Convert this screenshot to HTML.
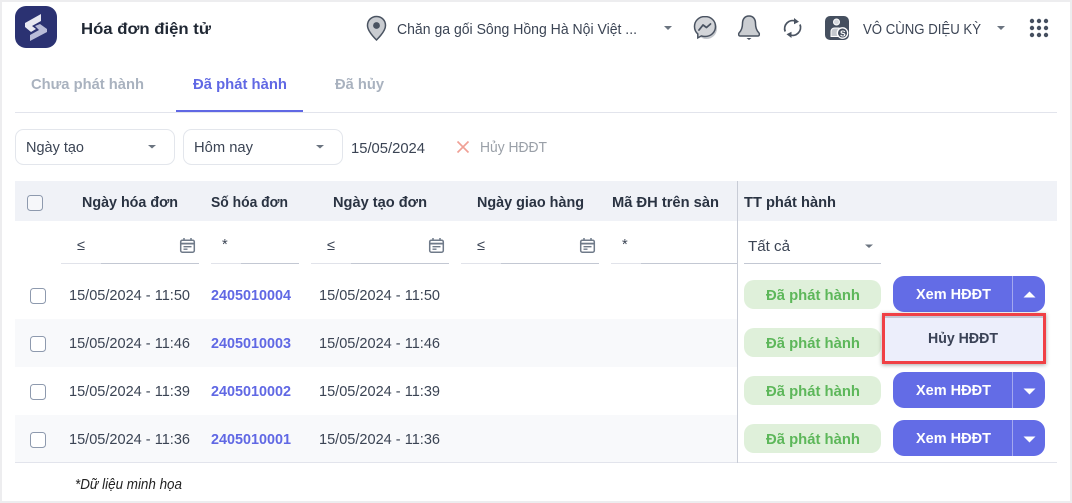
<!DOCTYPE html>
<html><head><meta charset="utf-8">
<style>
html,body{margin:0;padding:0;background:#fff;width:1072px;height:503px;overflow:hidden}
svg{display:block}
text{font-family:"Liberation Sans","Noto Sans CJK SC",sans-serif;font-size:14.6px;fill:#3b4454}
.b{font-weight:700}
.h{font-weight:700;fill:#2a3342}
.c{font-weight:700;fill:#6068e4}
.p{font-weight:700;fill:#5db75a}
.w{font-weight:700;fill:#fff}
.t{font-weight:700;fill:#a9b2bf}
</style></head><body>
<svg width="1072" height="503" viewBox="0 0 1072 503" xmlns="http://www.w3.org/2000/svg">
<defs>
<filter id="sh" x="-10%" y="-20%" width="120%" height="140%"><feDropShadow dx="0" dy="1" stdDeviation="2" flood-color="#000" flood-opacity=".35"/></filter>
<g id="cal" fill="none" stroke="#6f7a89" stroke-width="1.5"><rect x=".7" y="2.200" width="13.600" height="12" rx="1.600"/><path d="M4 0v3M11 0v3"/><path d="M1 5.600h13" stroke-width="1.800"/><path d="M3.500 8.700h8M3.500 11.200h4" stroke-width="1.400"/></g>
</defs>
<!-- outer frame -->
<rect x="1" y="1" width="1070" height="501" fill="#fff" stroke="#ededef" stroke-width="2"/>

<!-- logo -->
<rect x="15" y="6" width="42" height="42" rx="11" fill="#2b3272"/>
<path d="M41 14L41 21L32 26L36 29L31 32L25 27L25 23Z" fill="#e8e9f2"/>
<path d="M30 41L30 35L39 30L35 26L40 24L47 29L47 32Z" fill="#b9bcd8"/>

<text x="81" y="34" class="b" style="font-size:15.500px;fill:#1f2733" textLength="130" lengthAdjust="spacingAndGlyphs">Hóa đơn điện tử</text>

<!-- pin -->
<path d="M376.500 16.500c-5.200 0-9 3.900-9 9 0 5 5.500 11 9 14.500 3.500-3.500 9-9.500 9-14.500 0-5.100-3.800-9-9-9z" fill="#c9ccd1" stroke="#4a5361" stroke-width="1.500"/>
<circle cx="376.500" cy="25.500" r="3.400" fill="#4a5361"/>
<text x="397" y="34" textLength="240" lengthAdjust="spacingAndGlyphs">Chăn ga gối Sông Hồng Hà Nội Việt ...</text>
<path d="M664 26h8l-4 4z" fill="#6b7480"/>

<!-- messenger -->
<ellipse cx="706.500" cy="28.500" rx="10.500" ry="10.500" fill="#c4c7cc"/>
<path d="M705 16.500c-6 0-10.500 4.300-10.500 10 0 3 1.200 5.600 3.300 7.400v4l3.600-2c1.100.4 2.300.6 3.600.6 6 0 10.500-4.300 10.500-10s-4.500-10-10.500-10z" fill="#d3d5d9" stroke="#4a5361" stroke-width="1.500"/>
<path d="M699 30l4-5 3.500 2.500 4-3.500" fill="none" stroke="#4a5361" stroke-width="1.800" stroke-linecap="round" stroke-linejoin="round"/>

<!-- bell -->
<path d="M749 16c-4.500 0-6.500 3.500-6.500 7.500 0 5-1.500 7.500-3.500 9.500-.9 1-.2 3 1 3h18c1.200 0 1.900-2 1-3-2-2-3.500-4.500-3.500-9.500 0-4-2-7.500-6.500-7.500z" fill="#cbced2" stroke="#4a5361" stroke-width="1.500"/>
<path d="M746.500 38h5l-2.500 2z" fill="#4a5361"/>

<!-- sync -->
<path d="M785.200 31.500a8 8 0 0 1 10.500-10.300" fill="none" stroke="#4a5361" stroke-width="1.800"/>
<path d="M800 24.500a8 8 0 0 1-10.500 10.300" fill="none" stroke="#4a5361" stroke-width="1.800"/>
<path d="M794 18l5 3.800-5 2.500z" fill="#4a5361"/>
<path d="M791.500 38l-5-3.800 5-2.500z" fill="#4a5361"/>

<!-- account -->
<rect x="825" y="16" width="24" height="24" rx="5" fill="#454f5f"/>
<circle cx="836.500" cy="22" r="3" fill="#d5d8dd" stroke="#fff" stroke-width="1"/>
<path d="M831 36.500v-5c0-2 1.500-3.500 3.500-3.500h4c1 0 1.500.3 2 .8v7.700z" fill="#c4c8ce" stroke="#fff" stroke-width="1"/>
<circle cx="842.500" cy="33" r="5.200" fill="#454f5f" stroke="#fff" stroke-width="1.300"/>
<text x="840" y="36.300" style="font-size:8.500px;fill:#fff" class="b">S</text>

<text x="863" y="34" textLength="118" lengthAdjust="spacingAndGlyphs">VÔ CÙNG DIỆU KỲ</text>
<path d="M997 26h8l-4 4z" fill="#6b7480"/>

<!-- grid dots -->
<g fill="#454f5f">
<circle cx="1032" cy="21" r="2.200"/><circle cx="1039" cy="21" r="2.200"/><circle cx="1046" cy="21" r="2.200"/>
<circle cx="1032" cy="28" r="2.200"/><circle cx="1039" cy="28" r="2.200"/><circle cx="1046" cy="28" r="2.200"/>
<circle cx="1032" cy="35" r="2.200"/><circle cx="1039" cy="35" r="2.200"/><circle cx="1046" cy="35" r="2.200"/>
</g>

<!-- tabs -->
<text x="31" y="89" class="t" textLength="113" lengthAdjust="spacingAndGlyphs">Chưa phát hành</text>
<text x="193" y="89" class="c" textLength="94" lengthAdjust="spacingAndGlyphs">Đã phát hành</text>
<text x="335" y="89" class="t" textLength="49" lengthAdjust="spacingAndGlyphs">Đã hủy</text>
<rect x="15" y="112" width="1042" height="1" fill="#e2e4ec"/>
<rect x="176" y="110" width="127" height="2" fill="#6068e4"/>

<!-- filters -->
<rect x="15.500" y="129.500" width="159" height="35" rx="8" fill="#fff" stroke="#e3e6ec"/>
<text x="26" y="152" textLength="58" lengthAdjust="spacingAndGlyphs">Ngày tạo</text>
<path d="M148 145h8l-4 3.500z" fill="#6b7480"/>
<rect x="183.500" y="129.500" width="159" height="35" rx="8" fill="#fff" stroke="#e3e6ec"/>
<text x="194" y="152" textLength="59" lengthAdjust="spacingAndGlyphs">Hôm nay</text>
<path d="M316 145h8l-4 3.500z" fill="#6b7480"/>
<text x="351" y="153" textLength="74" lengthAdjust="spacingAndGlyphs">15/05/2024</text>
<path d="M457.500 141.500l11 11M468.500 141.500l-11 11" stroke="#f0a095" stroke-width="1.600"/>
<text x="480" y="152" style="fill:#9aa0a8" textLength="67" lengthAdjust="spacingAndGlyphs">Hủy HĐĐT</text>

<!-- table header -->
<rect x="15" y="181" width="1042" height="40" fill="#f0f2f7"/>
<rect x="27.500" y="195.500" width="15" height="15" rx="3" fill="#f6f7fa" stroke="#8e9aae"/>
<text x="82" y="207" class="h" textLength="96" lengthAdjust="spacingAndGlyphs">Ngày hóa đơn</text>
<text x="211" y="207" class="h" textLength="77" lengthAdjust="spacingAndGlyphs">Số hóa đơn</text>
<text x="333" y="207" class="h" textLength="94" lengthAdjust="spacingAndGlyphs">Ngày tạo đơn</text>
<text x="477" y="207" class="h" textLength="107" lengthAdjust="spacingAndGlyphs">Ngày giao hàng</text>
<text x="612" y="207" class="h" textLength="107" lengthAdjust="spacingAndGlyphs">Mã ĐH trên sàn</text>
<text x="744" y="207" class="h" textLength="92" lengthAdjust="spacingAndGlyphs">TT phát hành</text>

<!-- filter row -->
<g fill="#c3c8d3">
<rect x="101" y="263" width="98" height="1"/>
<rect x="241" y="263" width="58" height="1"/>
<rect x="351" y="263" width="98" height="1"/>
<rect x="501" y="263" width="98" height="1"/>
<rect x="641" y="263" width="96" height="1"/>
<rect x="744" y="263" width="137" height="1"/>
</g>
<g fill="#e1e3ea">
<rect x="61" y="263" width="40" height="1"/>
<rect x="211" y="263" width="30" height="1"/>
<rect x="311" y="263" width="40" height="1"/>
<rect x="461" y="263" width="40" height="1"/>
<rect x="611" y="263" width="30" height="1"/>
</g>
<text x="77" y="250">≤</text><text x="327" y="250">≤</text><text x="477" y="250">≤</text>
<text x="222" y="249">*</text><text x="622" y="249">*</text>
<use href="#cal" x="180" y="238"/><use href="#cal" x="429" y="238"/><use href="#cal" x="580" y="238"/>
<text x="748" y="251" textLength="42" lengthAdjust="spacingAndGlyphs">Tất cả</text>
<path d="M865 244.500h8l-4 3.500z" fill="#6b7480"/>

<!-- rows -->
<rect x="15" y="319" width="722" height="48" fill="#f8f9fb"/>
<rect x="15" y="415" width="722" height="47" fill="#f8f9fb"/>
<rect x="15" y="462" width="1042" height="1" fill="#e2e4ec"/>
<rect x="737" y="181" width="1" height="282" fill="#c8ccd6"/>

<g id="checks" fill="#fff" stroke="#8e9aae">
<rect x="30.500" y="288.500" width="15" height="15" rx="3"/>
<rect x="30.500" y="336.500" width="15" height="15" rx="3"/>
<rect x="30.500" y="384.500" width="15" height="15" rx="3"/>
<rect x="30.500" y="432.500" width="15" height="15" rx="3"/>
</g>

<text x="69" y="300" textLength="121" lengthAdjust="spacingAndGlyphs">15/05/2024 - 11:50</text>
<text x="211" y="300" class="c" textLength="80" lengthAdjust="spacingAndGlyphs">2405010004</text>
<text x="319" y="300" textLength="121" lengthAdjust="spacingAndGlyphs">15/05/2024 - 11:50</text>

<text x="69" y="348" textLength="121" lengthAdjust="spacingAndGlyphs">15/05/2024 - 11:46</text>
<text x="211" y="348" class="c" textLength="80" lengthAdjust="spacingAndGlyphs">2405010003</text>
<text x="319" y="348" textLength="121" lengthAdjust="spacingAndGlyphs">15/05/2024 - 11:46</text>

<text x="69" y="396" textLength="121" lengthAdjust="spacingAndGlyphs">15/05/2024 - 11:39</text>
<text x="211" y="396" class="c" textLength="80" lengthAdjust="spacingAndGlyphs">2405010002</text>
<text x="319" y="396" textLength="121" lengthAdjust="spacingAndGlyphs">15/05/2024 - 11:39</text>

<text x="69" y="444" textLength="121" lengthAdjust="spacingAndGlyphs">15/05/2024 - 11:36</text>
<text x="211" y="444" class="c" textLength="80" lengthAdjust="spacingAndGlyphs">2405010001</text>
<text x="319" y="444" textLength="121" lengthAdjust="spacingAndGlyphs">15/05/2024 - 11:36</text>

<!-- pills -->
<g fill="#dff0da">
<rect x="744" y="280" width="137" height="29" rx="10"/>
<rect x="744" y="328" width="137" height="29" rx="10"/>
<rect x="744" y="376" width="137" height="29" rx="10"/>
<rect x="744" y="424" width="137" height="29" rx="10"/>
</g>
<text x="766" y="300" class="p" textLength="94" lengthAdjust="spacingAndGlyphs">Đã phát hành</text>
<text x="766" y="348" class="p" textLength="94" lengthAdjust="spacingAndGlyphs">Đã phát hành</text>
<text x="766" y="396" class="p" textLength="94" lengthAdjust="spacingAndGlyphs">Đã phát hành</text>
<text x="766" y="444" class="p" textLength="94" lengthAdjust="spacingAndGlyphs">Đã phát hành</text>

<!-- buttons -->
<g fill="#636ce6">
<rect x="893" y="276" width="152" height="36" rx="11"/>
<rect x="893" y="372" width="152" height="36" rx="11"/>
<rect x="893" y="420" width="152" height="36" rx="11"/>
</g>
<g fill="#a3a8ef">
<rect x="1012" y="276" width="1" height="36"/>
<rect x="1012" y="372" width="1" height="36"/>
<rect x="1012" y="420" width="1" height="36"/>
</g>
<text x="916" y="299" class="w" textLength="75" lengthAdjust="spacingAndGlyphs">Xem HĐĐT</text>
<text x="916" y="395" class="w" textLength="75" lengthAdjust="spacingAndGlyphs">Xem HĐĐT</text>
<text x="916" y="443" class="w" textLength="75" lengthAdjust="spacingAndGlyphs">Xem HĐĐT</text>
<path d="M1023.500 297.500h12l-6-6z" fill="#fff"/>
<path d="M1023.500 388.500h12l-6 6z" fill="#fff"/>
<path d="M1023.500 436.500h12l-6 6z" fill="#fff"/>

<!-- dropdown highlight -->
<rect x="883.500" y="314.500" width="161" height="48" fill="#eceefb" stroke="#f04045" stroke-width="3" filter="url(#sh)"/>
<rect x="885" y="316" width="158" height="2" fill="#c5c7d4"/>
<text x="928" y="343" class="b" style="fill:#3a4256" textLength="70" lengthAdjust="spacingAndGlyphs">Hủy HĐĐT</text>

<text x="75" y="489" style="font-style:italic;fill:#222" textLength="107" lengthAdjust="spacingAndGlyphs">*Dữ liệu minh họa</text>
</svg>
</body></html>
